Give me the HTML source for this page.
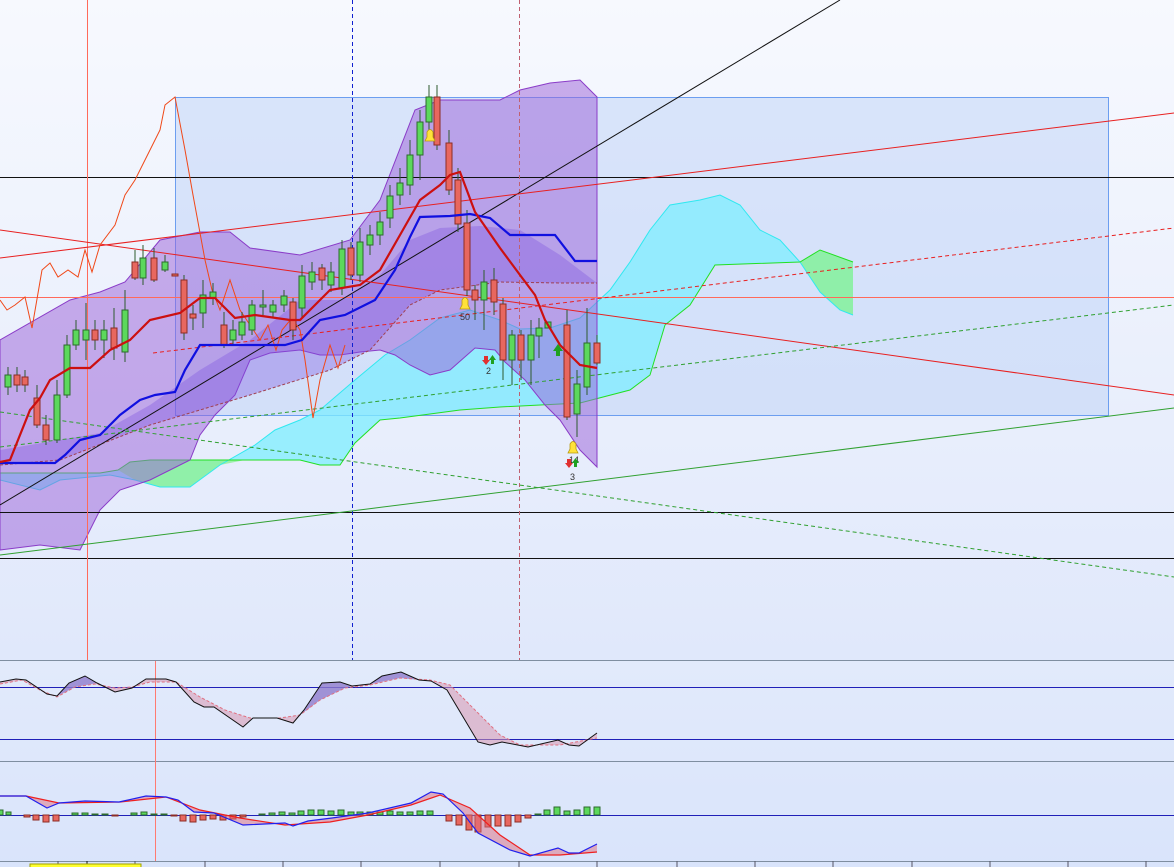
<!DOCTYPE html>
<html><head><meta charset="utf-8"><style>
html,body{margin:0;padding:0;width:1174px;height:867px;overflow:hidden;background:#e8eefc}
svg{display:block}
text{font-family:"Liberation Sans",sans-serif;font-size:9px;fill:#333}
.g{fill:#5cd85c;stroke:#2d6a2d;stroke-width:1}
.r{fill:#e8675f;stroke:#8c2c24;stroke-width:1}
.w{stroke:#2d5a2d;stroke-width:1}
</style></head><body>
<svg width="1174" height="867" viewBox="0 0 1174 867" xmlns="http://www.w3.org/2000/svg">
<defs>
<linearGradient id="bg" x1="0" y1="0" x2="0" y2="1">
<stop offset="0" stop-color="#f7f9fe"/><stop offset="1" stop-color="#e0e8fb"/></linearGradient>
<linearGradient id="bg2" x1="0" y1="0" x2="0" y2="1">
<stop offset="0" stop-color="#e2eafb"/><stop offset="1" stop-color="#d9e4fb"/></linearGradient>
</defs>
<rect x="0" y="0" width="1174" height="660" fill="url(#bg)"/>
<rect x="0" y="660" width="1174" height="207" fill="url(#bg2)"/>

<rect x="175.5" y="97.5" width="933" height="318" fill="#b8cff7" fill-opacity="0.45" stroke="#6c9ef0" stroke-width="1"/>

<polygon fill="#7eeeff" fill-opacity="0.75" points="0,480 40,490 60,480 80,478 110,475 135,480 160,487 190,487 220,465 255,445 275,430 300,420 320,410 355,380 385,355 410,340 440,318 470,310 500,320 520,329 550,328 580,318 610,290 630,262 650,230 670,205 700,200 720,195 740,205 760,230 780,240 800,262 820,292 840,310 853,315 853,262 820,250 800,262 715,265 690,305 665,325 650,375 630,390 580,403 500,407 460,410 400,418 380,420 355,443 340,465 320,465 300,460 200,460 150,460 130,462 118,470 100,473 0,473"/>
<polygon fill="#8ef09a" fill-opacity="0.85" points="118,470 130,462 150,460 200,460 300,460 245,460 220,465 190,487 160,487 135,480"/>
<polygon fill="#8ef09a" fill-opacity="0.85" points="800,262 820,250 853,262 853,315 840,310 820,292"/>
<polyline fill="none" stroke="#30e8f0" stroke-width="1" points="0,480 40,490 60,480 80,478 110,475 135,480 160,487 190,487 220,465 255,445 275,430 300,420 320,410 355,380 385,355 410,340 440,318 470,310 500,320 520,329 550,328 580,318 610,290 630,262 650,230 670,205 700,200 720,195 740,205 760,230 780,240 800,262 820,292 840,310 853,315"/>
<polyline fill="none" stroke="#22e022" stroke-width="1" points="853,262 820,250 800,262 715,265 690,305 665,325 650,375 630,390 580,403 500,407 460,410 400,418 380,420 355,443 340,465 320,465 300,460 200,460 150,460 130,462 118,470 100,473 0,473"/>

<polygon fill="#9a5fd8" fill-opacity="0.5" stroke="#8a3cc8" stroke-width="1" points="0,340 70,300 100,292 125,282 160,240 200,232 230,232 250,248 300,255 350,240 380,200 415,110 440,100 470,100 500,100 520,90 550,83 580,80 597,97 597,467 580,450 560,420 545,405 525,380 505,362 495,350 475,348 450,370 430,375 410,365 395,355 380,350 360,352 340,355 320,355 300,350 270,353 250,360 235,395 215,415 200,435 190,460 170,470 150,480 120,490 100,510 80,550 40,545 0,550"/>
<polygon fill="#7a50e0" fill-opacity="0.35" points="0,450 60,440 100,433 150,405 200,370 250,340 300,300 340,300 380,275 410,240 440,228 480,226 520,230 560,255 597,283 560,283 500,282 440,290 410,305 370,350 330,370 250,395 150,425 60,460 0,465"/>
<polyline fill="none" stroke="#a04050" stroke-width="1" stroke-dasharray="3,2" points="0,465 60,460 150,425 250,395 330,370 370,350 410,305 440,290 500,282 560,283 597,283"/>

<line x1="0" y1="177.5" x2="1174" y2="177.5" stroke="#111"/>
<line x1="0" y1="512.5" x2="1174" y2="512.5" stroke="#111"/>
<line x1="0" y1="558.5" x2="1174" y2="558.5" stroke="#111"/>
<rect x="0" y="297" width="1174" height="1" fill="#ff6a5a"/>
<rect x="87" y="0" width="1" height="660" fill="#ff6a5a"/>
<line x1="352.5" y1="0" x2="352.5" y2="660" stroke="#1020d0" stroke-dasharray="4,3"/>
<line x1="519.5" y1="0" x2="519.5" y2="660" stroke="#c06070" stroke-dasharray="4,3"/>
<line x1="0" y1="505" x2="840" y2="0" stroke="#111"/>
<line x1="0" y1="258" x2="1174" y2="113" stroke="#e82020"/>
<line x1="0" y1="230" x2="1174" y2="395" stroke="#e82020"/>
<line x1="153" y1="353" x2="1174" y2="228" stroke="#e82020" stroke-dasharray="4,3"/>
<line x1="0" y1="412" x2="1174" y2="577" stroke="#30a030" stroke-dasharray="4,3"/>
<line x1="0" y1="447" x2="1174" y2="305" stroke="#30a030" stroke-dasharray="4,3"/>
<line x1="0" y1="555" x2="1174" y2="408" stroke="#30a030"/>

<polyline fill="none" stroke="#f04818" stroke-width="1" points="0,300 7,310 15,305 25,297 32,328 42,270 50,263 58,277 68,270 78,277 85,250 92,272 100,245 115,225 125,195 135,180 150,150 160,130 165,105 175,97 185,150 193,195 205,260 212,290 220,310 230,280 240,310 248,322 260,340 268,325 276,350 282,330 292,318 300,330 305,360 313,418 320,380 330,345 338,368 345,345"/>

<g>
<line class="w" x1="8" y1="367" x2="8" y2="395"/><rect class="g" x="5" y="375" width="6" height="12"/>
<line class="w" x1="17" y1="367" x2="17" y2="392"/><rect class="r" x="14" y="375" width="6" height="10"/>
<line class="w" x1="25" y1="370" x2="25" y2="392"/><rect class="r" x="22" y="377" width="6" height="8"/>
<line class="w" x1="37" y1="385" x2="37" y2="428"/><rect class="r" x="34" y="398" width="6" height="27"/>
<line class="w" x1="46" y1="415" x2="46" y2="445"/><rect class="r" x="43" y="425" width="6" height="15"/>
<line class="w" x1="57" y1="380" x2="57" y2="443"/><rect class="g" x="54" y="395" width="6" height="45"/>
<line class="w" x1="67" y1="335" x2="67" y2="398"/><rect class="g" x="64" y="345" width="6" height="50"/>
<line class="w" x1="76" y1="320" x2="76" y2="350"/><rect class="g" x="73" y="330" width="6" height="15"/>
<line class="w" x1="86" y1="303" x2="86" y2="360"/><rect class="g" x="83" y="330" width="6" height="10"/>
<line class="w" x1="95" y1="320" x2="95" y2="350"/><rect class="r" x="92" y="330" width="6" height="10"/>
<line class="w" x1="104" y1="320" x2="104" y2="358"/><rect class="g" x="101" y="330" width="6" height="10"/>
<line class="w" x1="114" y1="308" x2="114" y2="360"/><rect class="r" x="111" y="328" width="6" height="20"/>
<line class="w" x1="125" y1="290" x2="125" y2="362"/><rect class="g" x="122" y="310" width="6" height="42"/>
<line class="w" x1="135" y1="250" x2="135" y2="280"/><rect class="r" x="132" y="262" width="6" height="16"/>
<line class="w" x1="143" y1="245" x2="143" y2="285"/><rect class="g" x="140" y="258" width="6" height="20"/>
<line class="w" x1="154" y1="248" x2="154" y2="282"/><rect class="r" x="151" y="258" width="6" height="22"/>
<line class="w" x1="165" y1="255" x2="165" y2="272"/><rect class="g" x="162" y="262" width="6" height="8"/>
<rect class="r" x="172" y="274" width="6" height="2"/>
<line class="w" x1="184" y1="275" x2="184" y2="340"/><rect class="r" x="181" y="280" width="6" height="53"/>
<line class="w" x1="193" y1="305" x2="193" y2="330"/><rect class="r" x="190" y="314" width="6" height="4"/>
<line class="w" x1="203" y1="280" x2="203" y2="328"/><rect class="g" x="200" y="295" width="6" height="18"/>
<line class="w" x1="213" y1="283" x2="213" y2="305"/><rect class="g" x="210" y="292" width="6" height="6"/>
<line class="w" x1="224" y1="312" x2="224" y2="348"/><rect class="r" x="221" y="325" width="6" height="20"/>
<line class="w" x1="233" y1="320" x2="233" y2="345"/><rect class="g" x="230" y="330" width="6" height="10"/>
<line class="w" x1="242" y1="312" x2="242" y2="340"/><rect class="g" x="239" y="322" width="6" height="13"/>
<line class="w" x1="252" y1="300" x2="252" y2="335"/><rect class="g" x="249" y="305" width="6" height="25"/>
<line class="w" x1="263" y1="290" x2="263" y2="315"/><rect class="g" x="260" y="305" width="6" height="2"/>
<line class="w" x1="273" y1="300" x2="273" y2="318"/><rect class="g" x="270" y="305" width="6" height="7"/>
<line class="w" x1="284" y1="290" x2="284" y2="312"/><rect class="g" x="281" y="296" width="6" height="9"/>
<line class="w" x1="293" y1="298" x2="293" y2="340"/><rect class="r" x="290" y="302" width="6" height="28"/>
<line class="w" x1="302" y1="265" x2="302" y2="318"/><rect class="g" x="299" y="276" width="6" height="32"/>
<line class="w" x1="312" y1="262" x2="312" y2="290"/><rect class="g" x="309" y="272" width="6" height="10"/>
<line class="w" x1="322" y1="264" x2="322" y2="290"/><rect class="r" x="319" y="268" width="6" height="12"/>
<line class="w" x1="331" y1="262" x2="331" y2="292"/><rect class="g" x="328" y="272" width="6" height="13"/>
<line class="w" x1="342" y1="240" x2="342" y2="295"/><rect class="g" x="339" y="249" width="6" height="39"/>
<line class="w" x1="351" y1="242" x2="351" y2="280"/><rect class="r" x="348" y="248" width="6" height="27"/>
<line class="w" x1="360" y1="228" x2="360" y2="282"/><rect class="g" x="357" y="242" width="6" height="33"/>
<line class="w" x1="370" y1="225" x2="370" y2="255"/><rect class="g" x="367" y="235" width="6" height="10"/>
<line class="w" x1="380" y1="212" x2="380" y2="245"/><rect class="g" x="377" y="222" width="6" height="13"/>
<line class="w" x1="390" y1="185" x2="390" y2="228"/><rect class="g" x="387" y="196" width="6" height="22"/>
<line class="w" x1="400" y1="168" x2="400" y2="205"/><rect class="g" x="397" y="183" width="6" height="12"/>
<line class="w" x1="410" y1="140" x2="410" y2="195"/><rect class="g" x="407" y="155" width="6" height="30"/>
<line class="w" x1="420" y1="110" x2="420" y2="180"/><rect class="g" x="417" y="122" width="6" height="33"/>
<line class="w" x1="429" y1="85" x2="429" y2="130"/><rect class="g" x="426" y="97" width="6" height="25"/>
<line class="w" x1="437" y1="85" x2="437" y2="150"/><rect class="r" x="434" y="97" width="6" height="48"/>
<line class="w" x1="449" y1="130" x2="449" y2="195"/><rect class="r" x="446" y="143" width="6" height="47"/>
<line class="w" x1="458" y1="168" x2="458" y2="232"/><rect class="r" x="455" y="180" width="6" height="44"/>
<line class="w" x1="467" y1="210" x2="467" y2="296"/><rect class="r" x="464" y="223" width="6" height="67"/>
<line class="w" x1="475" y1="285" x2="475" y2="320"/><rect class="r" x="472" y="290" width="6" height="10"/>
<line class="w" x1="484" y1="270" x2="484" y2="330"/><rect class="g" x="481" y="282" width="6" height="18"/>
<line class="w" x1="494" y1="268" x2="494" y2="315"/><rect class="r" x="491" y="280" width="6" height="22"/>
<line class="w" x1="503" y1="298" x2="503" y2="380"/><rect class="r" x="500" y="304" width="6" height="56"/>
<line class="w" x1="512" y1="330" x2="512" y2="385"/><rect class="g" x="509" y="335" width="6" height="25"/>
<line class="w" x1="521" y1="330" x2="521" y2="380"/><rect class="r" x="518" y="335" width="6" height="25"/>
<line class="w" x1="531" y1="320" x2="531" y2="385"/><rect class="g" x="528" y="335" width="6" height="25"/>
<line class="w" x1="539" y1="318" x2="539" y2="358"/><rect class="g" x="536" y="328" width="6" height="8"/>
<rect class="g" x="545" y="322" width="6" height="6"/>
<line class="w" x1="567" y1="310" x2="567" y2="420"/><rect class="r" x="564" y="325" width="6" height="92"/>
<line class="w" x1="577" y1="370" x2="577" y2="437"/><rect class="g" x="574" y="384" width="6" height="30"/>
<line class="w" x1="587" y1="308" x2="587" y2="395"/><rect class="g" x="584" y="343" width="6" height="44"/>
<line class="w" x1="597" y1="335" x2="597" y2="365"/><rect class="r" x="594" y="343" width="6" height="20"/>
</g>

<polyline fill="none" stroke="#1010e0" stroke-width="2.2" points="0,463 55,463 65,455 80,440 100,435 120,415 140,400 155,395 175,392 185,370 200,345 230,345 265,345 285,345 302,340 320,320 345,315 375,300 395,270 410,237 420,217 450,216 470,214 490,218 510,235 555,235 575,261 597,261"/>
<polyline fill="none" stroke="#cc1010" stroke-width="2.2" points="0,462 10,460 30,410 40,398 50,380 70,368 90,368 110,350 130,340 150,320 180,313 200,298 215,298 235,318 255,315 290,320 300,320 330,290 360,285 380,270 400,235 420,200 440,185 450,175 460,172 475,212 500,248 520,275 535,295 545,320 560,345 580,365 597,368"/>

<g fill="#ffe23a" stroke="#b89a10" stroke-width="0.8">
<path d="M425,141 L435,141 L433,137 L433,132 Q430,127 427,132 L427,137 Z"/>
<path d="M460,309 L470,309 L468,305 L468,300 Q465,295 462,300 L462,305 Z"/>
<path d="M568,453 L578,453 L576,449 L576,444 Q573,439 570,444 L570,449 Z"/>
</g>
<text x="460" y="320">50</text>
<text x="486" y="374">2</text>
<text x="569" y="463">14</text>
<text x="570" y="480">3</text>
<g fill="#e03030"><path d="M484,356h4v4h2l-4,5l-4,-5h2z"/><path d="M567,459h4v4h2l-4,5l-4,-5h2z"/></g>
<g fill="#20a020"><path d="M491,364h3v-4h2l-3.5,-5l-3.5,5h2z"/><path d="M574,467h3v-4h2l-3.5,-5l-3.5,5h2z"/><path d="M556,356h4v-5h3l-5,-7l-5,7h3z"/></g>

<line x1="0" y1="660.5" x2="1174" y2="660.5" stroke="#7f8ea0"/>
<line x1="0" y1="761.5" x2="1174" y2="761.5" stroke="#7f8ea0"/>
<line x1="0" y1="861.5" x2="1174" y2="861.5" stroke="#7f8ea0"/>
<rect x="155" y="661" width="1" height="200" fill="#ff7a70"/>

<line x1="0" y1="687.5" x2="1174" y2="687.5" stroke="#2020b8"/>
<line x1="0" y1="739.5" x2="1174" y2="739.5" stroke="#2020b8"/>
<polygon fill="#d898b0" fill-opacity="0.55" points="0,682 16,679 26,680 47,694 57,696 69,683 85,676 97,683 115,692 132,688 146,679 166,679 176,682 194,702 204,707 214,707 243,727 253,718 277,718 293,723 304,710 322,683 340,682 352,686 370,684 382,676 401,672 419,680 431,681 447,690 478,742 490,745 502,742 528,747 558,740 569,745 579,746 597,733 597,738 560,745 520,745 500,735 470,705 450,685 430,680 400,678 370,685 345,688 320,700 300,715 280,718 250,718 225,710 200,697 176,682 150,682 132,687 115,688 95,684 75,687 57,697 40,690 22,680 0,684"/>
<polygon fill="#7070d8" fill-opacity="0.55" points="57,696 69,683 85,676 97,683 75,687"/>
<polygon fill="#7070d8" fill-opacity="0.55" points="293,723 304,710 322,683 340,682 352,686 345,688 320,700 300,715"/>
<polygon fill="#7070d8" fill-opacity="0.55" points="370,684 382,676 401,672 419,680 400,678"/>
<polyline fill="none" stroke="#e07080" stroke-width="1" stroke-dasharray="3,2" points="0,684 22,680 40,690 57,697 75,687 95,684 115,688 132,687 150,682 176,682 200,697 225,710 250,718 280,718 300,715 320,700 345,688 370,685 400,678 430,680 450,685 470,705 500,735 520,745 560,745 597,738"/>
<polyline fill="none" stroke="#111" stroke-width="1" points="0,682 16,679 26,680 47,694 57,696 69,683 85,676 97,683 115,692 132,688 146,679 166,679 176,682 194,702 204,707 214,707 243,727 253,718 277,718 293,723 304,710 322,683 340,682 352,686 370,684 382,676 401,672 419,680 431,681 447,690 478,742 490,745 502,742 528,747 558,740 569,745 579,746 597,733"/>

<line x1="0" y1="815.5" x2="1174" y2="815.5" stroke="#2020b8"/>
<g>
<rect class="g" x="-2" y="810" width="5" height="5"/><rect class="g" x="6" y="812" width="5" height="3"/>
<rect class="r" x="24" y="815" width="6" height="2"/><rect class="r" x="33" y="815" width="6" height="5"/><rect class="r" x="43" y="815" width="6" height="7"/><rect class="r" x="53" y="815" width="6" height="6"/>
<rect class="g" x="72" y="813" width="6" height="2"/><rect class="g" x="82" y="813" width="6" height="2"/><rect class="g" x="92" y="814" width="6" height="1"/><rect class="g" x="102" y="814" width="6" height="1"/>
<rect class="r" x="112" y="815" width="6" height="1"/><rect class="g" x="131" y="813" width="6" height="2"/><rect class="g" x="141" y="812" width="6" height="3"/><rect class="g" x="151" y="814" width="6" height="1"/><rect class="g" x="161" y="814" width="6" height="1"/>
<rect class="r" x="171" y="815" width="6" height="1"/><rect class="r" x="180" y="815" width="6" height="6"/><rect class="r" x="190" y="815" width="6" height="7"/><rect class="r" x="200" y="815" width="6" height="5"/><rect class="r" x="210" y="815" width="6" height="4"/><rect class="r" x="220" y="815" width="6" height="5"/><rect class="r" x="230" y="815" width="6" height="4"/><rect class="r" x="240" y="815" width="6" height="2"/>
<rect class="g" x="259" y="814" width="6" height="1"/><rect class="g" x="269" y="813" width="6" height="2"/><rect class="g" x="279" y="812" width="6" height="3"/><rect class="g" x="289" y="813" width="6" height="2"/><rect class="g" x="298" y="811" width="6" height="4"/><rect class="g" x="308" y="810" width="6" height="5"/><rect class="g" x="318" y="810" width="6" height="5"/><rect class="g" x="328" y="811" width="6" height="4"/><rect class="g" x="338" y="810" width="6" height="5"/><rect class="g" x="348" y="812" width="6" height="3"/><rect class="g" x="357" y="812" width="6" height="3"/><rect class="g" x="367" y="812" width="6" height="3"/><rect class="g" x="377" y="812" width="6" height="3"/><rect class="g" x="387" y="811" width="6" height="4"/><rect class="g" x="397" y="812" width="6" height="3"/><rect class="g" x="407" y="812" width="6" height="3"/><rect class="g" x="417" y="811" width="6" height="4"/><rect class="g" x="427" y="811" width="6" height="4"/>
<rect class="r" x="446" y="815" width="6" height="6"/><rect class="r" x="456" y="815" width="6" height="10"/><rect class="r" x="466" y="815" width="6" height="15"/><rect class="r" x="475" y="815" width="6" height="17"/><rect class="r" x="485" y="815" width="6" height="12"/><rect class="r" x="495" y="815" width="6" height="11"/><rect class="r" x="505" y="815" width="6" height="11"/><rect class="r" x="515" y="815" width="6" height="7"/><rect class="r" x="525" y="815" width="6" height="3"/>
<rect class="g" x="535" y="814" width="6" height="1"/><rect class="g" x="544" y="810" width="6" height="5"/><rect class="g" x="554" y="807" width="6" height="8"/><rect class="g" x="564" y="811" width="6" height="4"/><rect class="g" x="574" y="810" width="6" height="5"/><rect class="g" x="584" y="807" width="6" height="8"/><rect class="g" x="594" y="807" width="6" height="8"/>
</g>
<polygon fill="#e07080" fill-opacity="0.5" points="0,796 26,796 47,808 59,803 85,801 119,802 146,796 166,797 178,800 194,812 214,813 243,825 285,823 293,826 308,821 332,818 368,813 411,803 431,792 443,794 463,813 478,833 510,850 530,856 558,848 569,853 579,853 597,844 597,852 560,855 530,855 500,835 470,808 440,795 411,805 368,815 330,822 285,825 240,818 200,810 166,797 120,802 59,803 26,796"/>
<polyline fill="none" stroke="#ee2020" stroke-width="1.2" points="0,796 26,796 59,803 120,802 166,797 200,810 240,818 285,825 330,822 368,815 411,805 440,795 470,808 500,835 530,855 560,855 597,852"/>
<polyline fill="none" stroke="#2020ee" stroke-width="1.2" points="0,796 26,796 47,808 59,803 85,801 119,802 146,796 166,797 178,800 194,812 214,813 243,825 285,823 293,826 308,821 332,818 368,813 411,803 431,792 443,794 463,813 478,833 510,850 530,856 558,848 569,853 579,853 597,844"/>

<g stroke="#556" stroke-width="1">
<line x1="58" y1="861" x2="58" y2="867"/><line x1="87" y1="861" x2="87" y2="867" stroke="#111"/><line x1="135" y1="861" x2="135" y2="867"/><line x1="205" y1="861" x2="205" y2="867"/><line x1="283" y1="861" x2="283" y2="867"/><line x1="361" y1="861" x2="361" y2="867"/><line x1="440" y1="861" x2="440" y2="867"/><line x1="519" y1="861" x2="519" y2="867"/><line x1="597" y1="861" x2="597" y2="867"/><line x1="677" y1="861" x2="677" y2="867"/><line x1="755" y1="861" x2="755" y2="867"/><line x1="833" y1="861" x2="833" y2="867"/><line x1="912" y1="861" x2="912" y2="867"/><line x1="990" y1="861" x2="990" y2="867"/><line x1="1068" y1="861" x2="1068" y2="867"/><line x1="1146" y1="861" x2="1146" y2="867"/>
</g>
<rect x="30" y="864" width="111" height="4" fill="#ffff30" stroke="#a0a000"/>
</svg>
</body></html>
